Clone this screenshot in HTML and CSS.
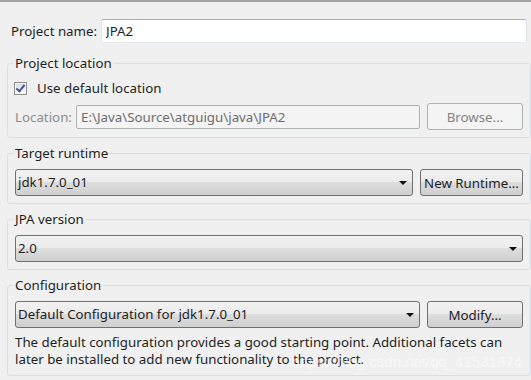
FILE: index.html
```html
<!DOCTYPE html>
<html lang="en">
<head>
    <meta charset="UTF-8">
    <title>New JPA Project</title>
    <link rel="stylesheet" href="styles.css">
</head>
<body>

    <div class="name-row">
        <label class="name-label" for="project-name">Project name:</label>
        <input class="text-input" id="project-name" type="text" value="JPA2">
    </div>

    <fieldset class="group">
        <legend>Project location</legend>
        <div class="check-row">
            <span class="checkbox checked"></span>
            <span>Use default location</span>
        </div>
        <div class="field-row">
            <span class="dim-label">Location:</span>
            <input class="text-input disabled-input" type="text" value="E:\Java\Source\atguigu\java\JPA2" disabled>
            <button class="btn btn-browse" disabled>Browse...</button>
        </div>
    </fieldset>

    <fieldset class="group">
        <legend>Target runtime</legend>
        <div class="field-row">
            <div class="combo">jdk1.7.0_01</div>
            <button class="btn btn-runtime">New Runtime...</button>
        </div>
    </fieldset>

    <fieldset class="group">
        <legend>JPA version</legend>
        <div class="combo">2.0</div>
    </fieldset>

    <fieldset class="group">
        <legend>Configuration</legend>
        <div class="field-row">
            <div class="combo">Default Configuration for jdk1.7.0_01</div>
            <button class="btn btn-modify">Modify...</button>
        </div>
        <p class="description">The default configuration provides a good starting point. Additional facets can<br>later be installed to add new functionality to the project.</p>
    </fieldset>

    <!-- blog watermark over the screenshot -->
    <div class="watermark">https://blog.csdn.net/qq_42531874</div>

</body>
</html>
```

FILE: styles.css
```css
body {
    margin: 0;
    background-color: #f0f0f0;
    border-top: 2px solid #a3a3a3;
    font-family: 'Noto Sans', 'Open Sans', sans-serif;
    font-size: 13.3px;
    color: #1e1e1e;
    position: relative;
    height: 378px;
    overflow: hidden;
}

.name-row {
    display: flex;
    align-items: center;
    padding: 17px 4px 0 11px;
}

.name-label {
    width: 90px;
    flex: none;
}

.text-input {
    flex: 1;
    min-width: 0;
    height: 24px;
    box-sizing: border-box;
    margin: 0;
    padding: 0 4px;
    font: inherit;
    color: #1e1e1e;
    background-color: #fff;
    border: 1px solid;
    border-color: #abadb3 #dbdfe6 #e3e9ef #e2e3ea;
    border-radius: 2px;
    outline: none;
}

.disabled-input {
    background-color: #f4f4f4;
    border-color: #adb2b5;
    color: #6d6d6d;
}

.group {
    margin: 7px 0 0 7px;
    padding: 8px 7px 7px 7px;
    border: 1px solid #d5dfe5;
    border-radius: 3px;
}

.name-row + .group {
    margin-top: 12px;
}

.group legend {
    padding: 0 2px;
    margin-left: -2px;
    line-height: 16px;
}

.check-row {
    display: flex;
    align-items: center;
    gap: 10px;
    height: 18px;
    margin-left: -1px;
    margin-bottom: 6px;
}

.checkbox {
    width: 11px;
    height: 11px;
    border: 1px solid #8f8f8f;
    background: linear-gradient(#dcdcdc, #fefefe);
    box-shadow: inset 0 0 0 1px #f4f4f4;
    position: relative;
}

.checkbox.checked::after {
    content: "";
    position: absolute;
    left: 3px;
    top: 0px;
    width: 3px;
    height: 7px;
    border: solid #3d5598;
    border-width: 0 2px 2px 0;
    transform: rotate(40deg);
}

.field-row {
    display: flex;
    align-items: center;
    gap: 7px;
    height: 27px;
}

.dim-label {
    color: #8d8d8d;
    width: 54px;
    flex: none;
}

.combo {
    flex: 1;
    height: 27px;
    box-sizing: border-box;
    border: 1px solid #707070;
    border-radius: 3px;
    background: linear-gradient(#f2f2f2 0%, #ebebeb 50%, #dddddd 50%, #cfcfcf 100%);
    padding: 0 20px 0 2px;
    line-height: 25px;
    position: relative;
}

.combo::after {
    content: "";
    position: absolute;
    right: 5px;
    top: 11px;
    border-left: 4px solid transparent;
    border-right: 4px solid transparent;
    border-top: 4px solid #111;
}

.btn {
    flex: none;
    height: 27px;
    box-sizing: border-box;
    margin: 0;
    padding: 0;
    font: inherit;
    color: #1e1e1e;
    border: 1px solid #707070;
    border-radius: 3px;
    background: linear-gradient(#f2f2f2 0%, #ebebeb 50%, #dddddd 50%, #cfcfcf 100%);
}

.btn:disabled {
    color: #838383;
    border-color: #adb2b5;
    background: #f4f4f4;
}

.btn-browse,
.btn-modify {
    width: 96px;
}

.btn-runtime {
    width: 103px;
}

.description {
    margin: 6px 0 0 0;
    line-height: 17px;
    white-space: nowrap;
}

.watermark {
    position: absolute;
    right: 9px;
    top: 351px;
    font-family: 'Liberation Sans', sans-serif;
    font-size: 15px;
    color: rgba(255, 255, 255, 0.55);
    pointer-events: none;
}
```
